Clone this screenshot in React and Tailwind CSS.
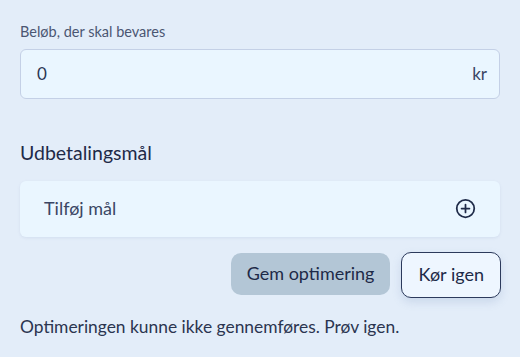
export default function App() {
  return (
    <div className="min-h-[357px] w-[520px] bg-[#e3edf9] px-5 pt-[21px] font-['Lato',sans-serif] text-[#1e2a48]">
      <label className="block text-[14.5px] text-[#4b5672]">Beløb, der skal bevares</label>
      <div className="mt-[6px] flex h-[50px] w-[480px] items-center justify-between rounded-[6px] border border-[#c4d0e6] bg-[#eaf6ff] pl-4 pr-[12px] text-[17px] text-[#2a3654]">
        <span>0</span>
        <span className="text-[#3b4664]">kr</span>
      </div>

      <h3 className="mt-[42px] text-[19.5px] leading-6 text-[#1e2a48]">Udbetalingsmål</h3>
      <div className="mt-[16px] flex h-[56px] w-[480px] items-center justify-between rounded-[6px] bg-[#eaf6ff] pl-6 pr-[24px] shadow-[0_1px_3px_rgba(120,150,190,0.15)]">
        <span className="text-[18px] text-[#3b4664]">Tilføj mål</span>
        <svg width="21" height="21" viewBox="0 0 24 24" fill="none" stroke="#1e2a48" strokeWidth="2" strokeLinecap="round">
          <circle cx="12" cy="12" r="10" />
          <path d="M12 7.5v9M7.5 12h9" />
        </svg>
      </div>

      <div className="mt-[15px] flex w-[481px] justify-end gap-[11px]">
        <button className="mt-px h-[42px] rounded-[10px] bg-[#b3c6d6] px-4 text-[18px] text-[#1e2a48]">
          Gem optimering
        </button>
        <button className="h-[46px] rounded-[10px] border border-[#2c3a5c] bg-[#eef6ff] px-[16px] text-[18px] text-[#1e2a48] shadow-[0_4px_10px_rgba(100,130,180,0.2)]">
          Kør igen
        </button>
      </div>

      <p className="mt-[16px] text-[17.4px] text-[#2b3550]">Optimeringen kunne ikke gennemføres. Prøv igen.</p>
    </div>
  );
}
